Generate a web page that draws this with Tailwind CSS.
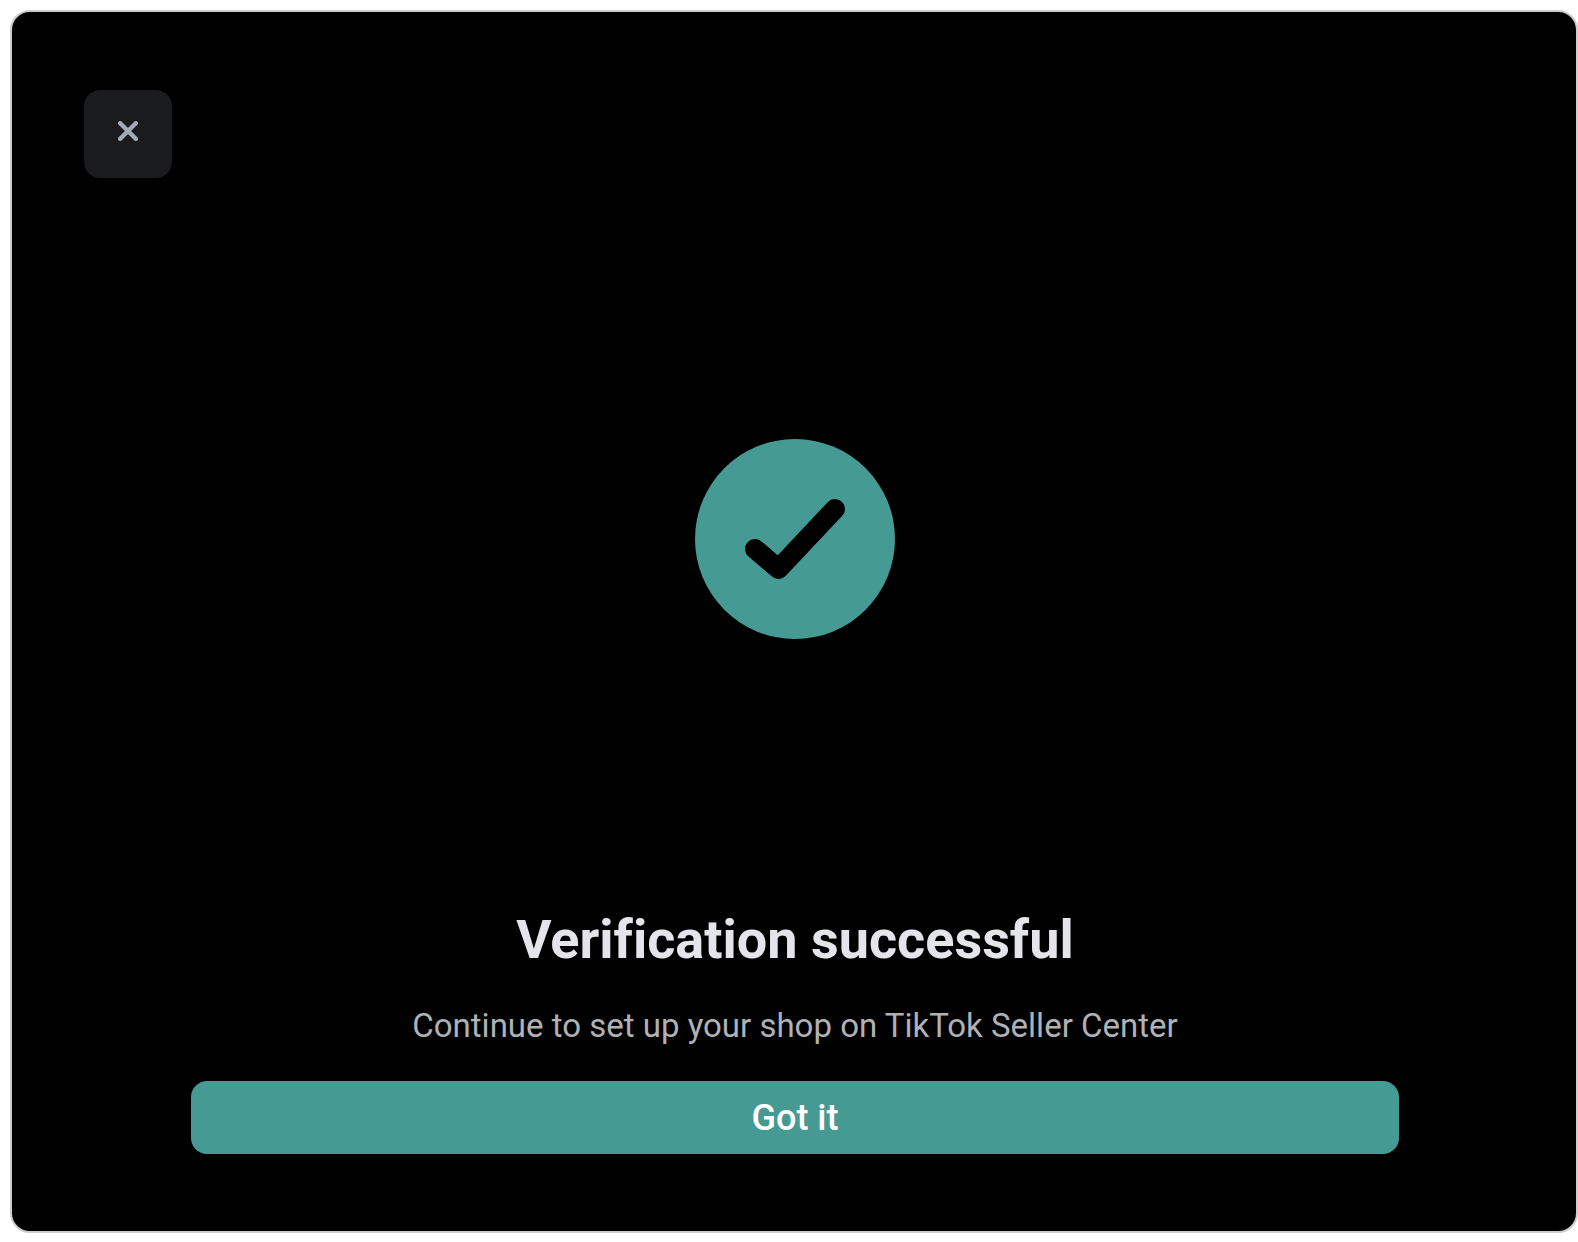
<!DOCTYPE html>
<html lang="en">
<head>
  <meta charset="UTF-8" />
  <meta name="viewport" content="width=device-width, initial-scale=1.0"/>
  <title>Verification successful | TikTok Seller Center</title>
  <script src="https://cdn.jsdelivr.net/npm/@tailwindcss/browser@4"></script>
</head>
<body class="bg-white min-h-screen flex flex-col pt-[10px] pl-[10px] pb-[9px] font-['Roboto','Liberation_Sans',sans-serif]">
  <main class="flex-1 flex flex-col bg-black border-2 border-[#cccccc] rounded-[20px] pl-[72px] pr-[70px] pt-[78px] pb-[77px]">
    <button type="button" aria-label="Close" class="size-[88px] rounded-2xl bg-[#1a1b1d] pb-[6px] flex items-center justify-center">
      <svg class="size-5" viewBox="0 0 20 20" fill="none" stroke="#a3abb4" stroke-width="4.400" stroke-linecap="round">
        <path d="M2.200 2.200l15.600 15.600M17.800 2.200L2.200 17.800"/>
      </svg>
    </button>

    <div class="flex-1 flex items-center justify-center">
      <svg class="size-[200px]" viewBox="0 0 200 200" fill="none">
        <circle cx="100" cy="100" r="100" fill="#469a94"/>
        <path d="M60 110l23.500 20L140 70" stroke="#000" stroke-width="20" stroke-linecap="round" stroke-linejoin="round"/>
      </svg>
    </div>

    <div class="px-[107px] text-center">
      <h1 class="text-[54px] leading-[80px] font-bold text-[#e4e5e9] [font-variant-ligatures:none]">Verification successful</h1>
      <p class="mt-[22px] text-[33px] leading-[48px] text-[#b0b1b5]">Continue to set up your shop on TikTok Seller Center</p>
      <button type="button" class="mt-[31px] w-full h-[73px] rounded-2xl bg-[#469a94] text-[36px] font-medium text-white">Got it</button>
    </div>
  </main>
</body>
</html>
